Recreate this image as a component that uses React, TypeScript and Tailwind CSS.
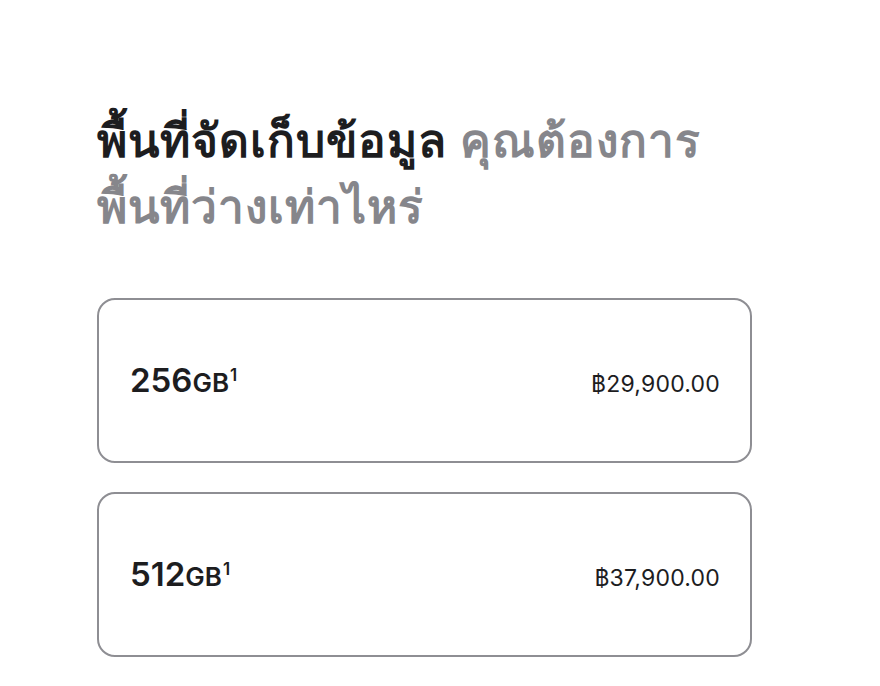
const options = [
  { size: "256", price: "฿29,900.00" },
  { size: "512", price: "฿37,900.00" },
];

export default function App() {
  return (
    <div
      className="min-h-[686px] w-[880px] bg-white pl-[97px] pt-[107px] text-[#1d1d1f]"
      style={{ fontFamily: '"Inter", "Noto Sans", "DejaVu Sans", sans-serif' }}
    >
      <h2 className="text-[46px] font-semibold leading-[66px] tracking-[1px]">
        พื้นที่จัดเก็บข้อมูล{" "}
        <span className="text-[#86868b]">
          คุณต้องการ
          <br />
          พื้นที่ว่างเท่าไหร่
        </span>
      </h2>
      <div className="mt-[59px] flex w-[655px] flex-col gap-[29px]">
        {options.map((o) => (
          <div
            key={o.size}
            className="flex h-[165px] items-center justify-between rounded-[18px] border-2 border-[#8e8e93] pl-[31px] pr-[30px]"
          >
            <div className="flex items-baseline font-semibold">
              <span className="text-[33px] leading-none">{o.size}</span>
              <span className="text-[26px] leading-none">GB</span>
              <span className="relative -top-[11px] ml-[1px] text-[17px] leading-none">1</span>
            </div>
            <div className="pt-[8px] text-[23px] tracking-[0.2px]">{o.price}</div>
          </div>
        ))}
      </div>
    </div>
  );
}
